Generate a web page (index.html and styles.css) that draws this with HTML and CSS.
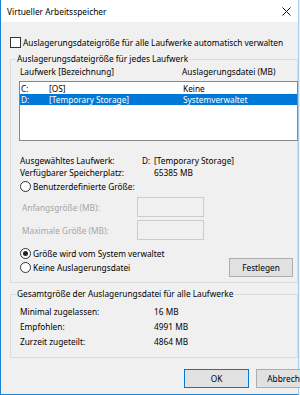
FILE: index.html
```html
<!DOCTYPE html>
<html lang="de">
<head>
    <meta charset="UTF-8">
    <meta name="viewport" content="width=device-width, initial-scale=1.0">
    <title>Virtueller Arbeitsspeicher</title>
    <link rel="stylesheet" href="styles.css">
</head>
<body>
    <div class="window">
        <header class="titlebar">
            <span class="title">Virtueller Arbeitsspeicher</span>
            <svg class="close" width="9" height="9" viewBox="0 0 9 9">
                <path d="M0.5 0.5 L8.5 8.5 M8.5 0.5 L0.5 8.5" stroke="#111" stroke-width="1" fill="none"/>
            </svg>
        </header>

        <main class="content">
            <div class="check-row">
                <span class="checkbox"></span>
                <span>Auslagerungsdateigröße für alle Laufwerke automatisch verwalten</span>
            </div>

            <fieldset class="group group-drives">
                <legend>Auslagerungsdateigröße für jedes Laufwerk</legend>

                <div class="list-head">
                    <span class="col-drive">Laufwerk [Bezeichnung]</span>
                    <span>Auslagerungsdatei (MB)</span>
                </div>
                <div class="list">
                    <div class="list-row">
                        <span class="col-letter">C:</span>
                        <span class="col-label">[OS]</span>
                        <span>Keine</span>
                    </div>
                    <div class="list-row selected">
                        <span class="col-letter">D:</span>
                        <span class="col-label">[Temporary Storage]</span>
                        <span>Systemverwaltet</span>
                    </div>
                </div>

                <div class="info">
                    <span>Ausgewähltes Laufwerk:</span>
                    <span>D:</span>
                    <span>[Temporary Storage]</span>
                    <span>Verfügbarer Speicherplatz:</span>
                    <span class="span-2">65385 MB</span>
                </div>

                <div class="radio-row first">
                    <span class="radio"></span>
                    <span>Benutzerdefinierte Größe:</span>
                </div>
                <div class="size-row disabled">
                    <span class="size-label">Anfangsgröße (MB):</span>
                    <span class="size-input"></span>
                </div>
                <div class="size-row disabled second">
                    <span class="size-label">Maximale Größe (MB):</span>
                    <span class="size-input"></span>
                </div>
                <div class="radio-row system">
                    <span class="radio checked"></span>
                    <span>Größe wird vom System verwaltet</span>
                </div>
                <div class="radio-row none">
                    <span class="radio"></span>
                    <span class="radio-text">Keine Auslagerungsdatei</span>
                    <button class="btn btn-set">Festlegen</button>
                </div>
            </fieldset>

            <fieldset class="group group-total">
                <legend>Gesamtgröße der Auslagerungsdatei für alle Laufwerke</legend>
                <div class="totals">
                    <span>Minimal zugelassen:</span>
                    <span>16 MB</span>
                    <span>Empfohlen:</span>
                    <span>4991 MB</span>
                    <span>Zurzeit zugeteilt:</span>
                    <span>4864 MB</span>
                </div>
            </fieldset>

            <div class="buttons">
                <button class="btn btn-default">OK</button>
                <button class="btn">Abbrechen</button>
            </div>
        </main>
    </div>
</body>
</html>
```

FILE: styles.css
```css
body, html {
    margin: 0;
    padding: 0;
    width: 300px;
    height: 395px;
    overflow: hidden;
    background-color: #f0f0f0;
    font-family: "Noto Sans", "Open Sans", sans-serif;
    font-size: 8.3px;
    color: #000;
    white-space: nowrap;
}

.window {
    box-sizing: border-box;
    width: 299px;
    height: 395px;
    border-left: 1px solid #1883d7;
    border-right: 1px solid #a9cdec;
    border-bottom: 1px solid #1883d7;
    background-color: #f0f0f0;
}

.titlebar {
    height: 22px;
    background-color: #ffffff;
    display: flex;
    align-items: center;
    justify-content: space-between;
    padding: 0 6px 0 6px;
}

.title {
    font-size: 8.4px;
    padding-top: 1px;
}

.close {
    display: block;
    margin-right: 1px;
}

.content {
    padding-left: 9px;
}

.check-row {
    display: flex;
    align-items: center;
    height: 12px;
    margin-top: 14px;
}

.checkbox {
    box-sizing: border-box;
    width: 11px;
    height: 11px;
    border: 1px solid #333;
    background-color: #fff;
    margin-right: 2px;
}

.group {
    box-sizing: border-box;
    width: 288px;
    margin: 5px 0 0 0;
    padding: 0 0 5px 9px;
    border: 1px solid #dcdcdc;
    min-width: 0;
}

.group legend {
    padding: 0 1px;
    margin-left: -4px;
    line-height: 12px;
}

.list-head {
    display: flex;
    line-height: 12px;
    padding-top: 1px;
}

.col-drive {
    width: 162px;
}

.list {
    box-sizing: border-box;
    width: 279px;
    height: 60px;
    margin: 3px 0 0 -1px;
    padding-top: 1px;
    border: 1px solid #828790;
    background-color: #fff;
}

.list-row {
    display: flex;
    height: 11px;
    line-height: 11px;
    padding-left: 1px;
}

.list-row.selected {
    background-color: #0078d7;
    color: #fff;
}

.col-letter {
    width: 28px;
}

.col-label {
    width: 134px;
}

.info {
    display: grid;
    grid-template-columns: 122px 12px 1fr;
    line-height: 12px;
    margin-top: 14px;
}

.span-2 {
    grid-column: 2 / 4;
    padding-left: 12px;
}

.radio-row {
    display: flex;
    align-items: center;
    height: 12px;
}

.radio-row.first {
    margin-top: 1px;
}

.radio-row.system {
    margin-top: 7px;
}

.radio-row.none {
    height: 19px;
    margin-top: -1px;
}

.radio-text {
    flex: 1;
}

.radio {
    box-sizing: border-box;
    width: 11px;
    height: 11px;
    border: 1px solid #333;
    border-radius: 50%;
    background-color: #fff;
    margin-right: 2px;
    display: flex;
    align-items: center;
    justify-content: center;
}

.radio.checked::after {
    content: "";
    width: 5px;
    height: 5px;
    border-radius: 50%;
    background-color: #222;
}

.size-row {
    display: flex;
    align-items: center;
    height: 20px;
    margin-top: 5px;
}

.size-row.second {
    margin-top: 3px;
}

.size-row.disabled {
    color: #a6a6a6;
}

.size-label {
    width: 115px;
    padding-left: 2px;
}

.size-input {
    box-sizing: border-box;
    width: 67px;
    height: 20px;
    border: 1px solid #cccccc;
    background-color: #f0f0f0;
}

.btn {
    box-sizing: border-box;
    flex-shrink: 0;
    width: 65px;
    height: 19px;
    padding: 0;
    border: 1px solid #adadad;
    background-color: #e1e1e1;
    font-family: inherit;
    font-size: 8.3px;
    color: #000;
    white-space: nowrap;
}

.btn-set {
    width: 64px;
    margin-right: 4px;
}

.btn-default {
    border-color: #0078d7;
}

.group-total {
    padding-bottom: 8px;
}

.totals {
    display: grid;
    grid-template-columns: 134px 1fr;
    grid-auto-rows: 15px;
    align-items: center;
    margin-top: 4px;
}

.buttons {
    display: flex;
    gap: 7px;
    margin-top: 11px;
    padding-left: 174px;
}
```
